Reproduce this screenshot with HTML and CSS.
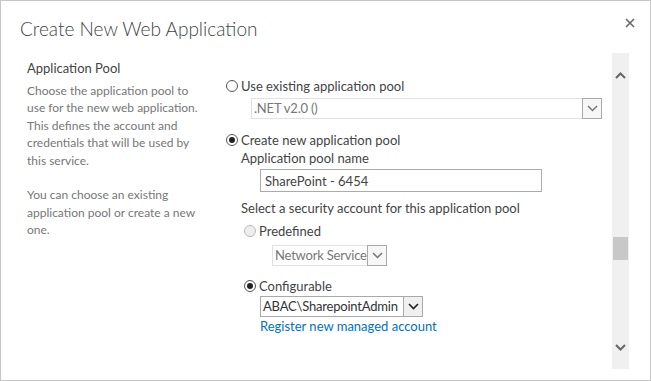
FILE: index.html
```html
<!DOCTYPE html>
<html lang="en">
<head>
  <meta charset="UTF-8" />
  <title>Create New Web Application</title>
  <link rel="stylesheet" href="styles.css">
</head>
<body>

  <div class="dialogo">
    <div class="cabecera">
      <h1>Create New Web Application</h1>
      <button class="cerrar" title="Close">
        <svg width="10" height="10" viewBox="0 0 10 10"><path d="M1 1 L9 9 M9 1 L1 9" stroke="#666" stroke-width="1.6"/></svg>
      </button>
    </div>

    <div class="cuerpo">
      <div class="contenido">
        <div class="seccion">
          <div class="info">
            <h3>Application Pool</h3>
            <p>Choose the application pool to use for the new web application. This defines the account and credentials that will be used by this service.</p>
            <p>You can choose an existing application pool or create a new one.</p>
          </div>

          <div class="campos">
            <label class="opcion">
              <span class="radio"></span>Use existing application pool
            </label>
            <div class="select desactivado ancho">
              <span class="valor">.NET v2.0 ()</span>
              <span class="flecha"><svg width="11" height="7" viewBox="0 0 11 7"><path d="M1 1 L5.5 5.5 L10 1" fill="none" stroke="#777" stroke-width="1.5"/></svg></span>
            </div>

            <label class="opcion">
              <span class="radio marcado"></span>Create new application pool
            </label>
            <div class="sangria">
              <div class="etiqueta">Application pool name</div>
              <input class="texto" value="SharePoint - 6454">
              <div class="etiqueta">Select a security account for this application pool</div>

              <label class="opcion sub">
                <span class="radio gris"></span>Predefined
              </label>
              <div class="select desactivado corto">
                <span class="valor">Network Service</span>
                <span class="flecha"><svg width="11" height="7" viewBox="0 0 11 7"><path d="M1 1 L5.5 5.5 L10 1" fill="none" stroke="#777" stroke-width="1.5"/></svg></span>
              </div>

              <label class="opcion sub conf">
                <span class="radio marcado"></span>Configurable
              </label>
              <div class="select cuenta">
                <span class="valor">ABAC\SharepointAdmin</span>
                <span class="flecha"><svg width="11" height="7" viewBox="0 0 11 7"><path d="M1 1 L5.5 5.5 L10 1" fill="none" stroke="#222" stroke-width="1.6"/></svg></span>
              </div>
              <a class="enlace" href="#">Register new managed account</a>
            </div>
          </div>
        </div>
      </div>

      <div class="scroll">
        <span class="boton"><svg width="11" height="7" viewBox="0 0 11 7"><path d="M1 6 L5.5 1.5 L10 6" fill="none" stroke="#666" stroke-width="2"/></svg></span>
        <div class="pista"><div class="pulgar"></div></div>
        <span class="boton"><svg width="11" height="7" viewBox="0 0 11 7"><path d="M1 1 L5.5 5.5 L10 1" fill="none" stroke="#666" stroke-width="2"/></svg></span>
      </div>
    </div>
  </div>

</body>
</html>
```

FILE: styles.css
```css
body {
  margin: 0;
  font-family: Lato, "Open Sans", sans-serif;
  font-size: 13px;
  color: #444;
  background: #fff;
}

.dialogo {
  width: 651px;
  height: 381px;
  box-sizing: border-box;
  border: 1px solid #c6c6c6;
  display: flex;
  flex-direction: column;
  background: #fff;
}

.cabecera {
  display: flex;
  justify-content: space-between;
  align-items: flex-start;
  height: 52px;
  padding: 0 0 0 19px;
}

.cabecera h1 {
  margin: 16px 0 0 0;
  font-weight: 300;
  font-size: 19px;
  color: #444;
}

.cerrar {
  border: none;
  background: none;
  padding: 0;
  margin: 15px 14px 0 0;
  width: 12px;
  height: 12px;
}

.cuerpo {
  flex: 1;
  display: flex;
  padding-bottom: 11px;
}

.contenido {
  flex: 1;
  overflow: hidden;
}

.seccion {
  display: flex;
  padding: 7px 0 0 26px;
}

.info {
  width: 176px;
  color: #777;
  line-height: 17.5px;
}

.info h3 {
  margin: 0 0 4px 0;
  font-weight: normal;
  font-size: 13px;
  color: #444;
}

.info p {
  margin: 0 0 17px 0;
  font-size: 12px;
}

.campos {
  padding: 17px 0 0 23px;
  width: 351px;
}

.opcion {
  display: flex;
  align-items: center;
  height: 18px;
  color: #444;
}

.radio {
  width: 12px;
  height: 12px;
  border: 1px solid #555;
  border-radius: 50%;
  margin-right: 3px;
  box-sizing: border-box;
  position: relative;
  background: #fff;
}

.radio.marcado::after {
  content: "";
  position: absolute;
  left: 2px;
  top: 2px;
  width: 6px;
  height: 6px;
  border-radius: 50%;
  background: #222;
}

.radio.gris {
  border-color: #bbb;
  background: #eee;
}

.select {
  display: flex;
  box-sizing: border-box;
  height: 21px;
  border: 1px solid #c8c8c8;
  background: #fff;
  letter-spacing: -0.2px;
}

.select .valor {
  flex: 1;
  padding: 1px 2px 0 2px;
  white-space: nowrap;
  overflow: hidden;
}

.select .flecha {
  width: 18px;
  border-left: 1px solid #c8c8c8;
  display: flex;
  align-items: center;
  justify-content: center;
}

.select.desactivado {
  border-color: #e1e1e1;
  color: #777;
}

.select.desactivado .flecha {
  border: 1px solid #a9a9a9;
  margin: -1px -1px -1px 0;
  background: #f7f7f7;
}

.ancho {
  width: 351px;
  margin: 3px 0 12px 25px;
}

.sangria {
  padding-left: 15px;
}

.etiqueta {
  height: 18px;
  display: flex;
  align-items: center;
}

.texto {
  display: block;
  width: 282px;
  height: 23px;
  box-sizing: border-box;
  margin: 2px 0 7px 19px;
  border: 1px solid #ababab;
  padding: 0 4px;
  font: inherit;
  color: #444;
}

.sub {
  margin: 5px 0 0 3px;
}

.corto {
  width: 115px;
  margin: 5px 0 11px 31px;
}

.conf {
  margin-top: 0;
}

.cuenta {
  width: 163px;
  margin: 1px 0 0 19px;
  border-color: #a9a9a9;
  color: #333;
}

.cuenta .flecha {
  border-left-color: #a9a9a9;
  background: #f0f0f0;
}

.enlace {
  display: block;
  margin: 1px 0 0 19px;
  color: #0072c6;
  text-decoration: none;
}

.scroll {
  width: 17px;
  margin: 0 21px 0 0;
  background: #f0f0f0;
  display: flex;
  flex-direction: column;
  align-items: center;
}

.boton {
  height: 44px;
  display: flex;
  align-items: center;
}

.pista {
  flex: 1;
  width: 100%;
  position: relative;
}

.pulgar {
  position: absolute;
  left: 1px;
  right: 1px;
  top: 140px;
  height: 23px;
  background: #c8c8c8;
}
```
